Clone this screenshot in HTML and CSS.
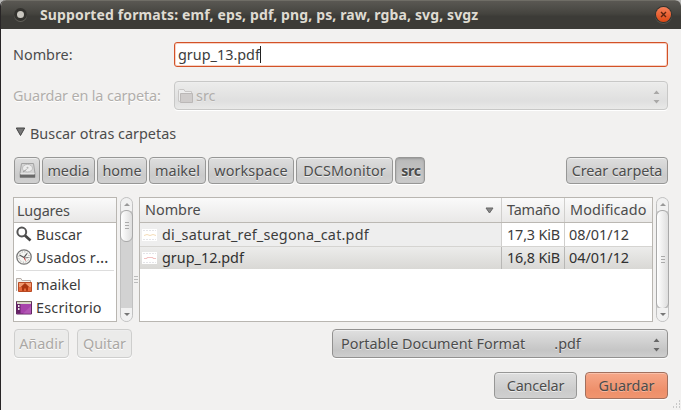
FILE: index.html
```html
<!DOCTYPE html>
<html lang="es">
<head>
<meta charset="utf-8">
<title>Supported formats</title>
<link rel="stylesheet" href="styles.css">
</head>
<body>
<div class="window">
  <header class="titlebar">
    <span class="menu-dot"></span>
    <h1>Supported formats: emf, eps, pdf, png, ps, raw, rgba, svg, svgz</h1>
    <span class="close"><svg width="15" height="15" viewBox="0 0 15 15"><path d="M5 5l5 5M10 5l-5 5" stroke="#5c2410" stroke-width="1.4"/></svg></span>
  </header>
  <main>
    <div class="row name-row">
      <span class="label">Nombre:</span>
      <div class="entry"><span class="t-entry">grup_13.pdf</span><i class="caret"></i></div>
    </div>
    <div class="row folder-row">
      <span class="label off t-folder">Guardar en la carpeta:</span>
      <div class="combo disabled">
        <svg width="17" height="16" viewBox="0 0 17 16"><path d="M.5 13V2.5Q.5 1.500 1.500 1.500H6L7 3.500H13.500V5" fill="#eee" stroke="#c9c7c6"/><path d="M2.500 5.500h12v9h-12z" fill="#cfcccb" stroke="#bbb8b7"/><path d="M.5 13.500h2" stroke="#c9c7c6"/></svg>
        <span class="grow">src</span>
        <svg class="arrows" width="7" height="14" viewBox="0 0 7 14"><path d="M.5 4L3.5 .5 6.5 4zM.5 10H6.5L3.5 13.5z" fill="#a9a8a7"/></svg>
      </div>
    </div>
    <div class="expander">
      <svg width="11" height="10" viewBox="0 0 11 10"><path d="M1.3 1H9.7L5.5 8.5z" fill="#777" stroke="#444"/></svg>
      <span class="t-search">Buscar otras carpetas</span>
    </div>
    <nav class="path">
      <span class="btn w-disk"><svg width="17" height="17" viewBox="0 0 17 17"><path d="M2.500 1.500h12l1.500 10v4H1v-4z" fill="#d4d4d4" stroke="#a2a2a2"/><path d="M1 12h15v3.500H1z" fill="#6a6a6a"/><path d="M1.500 12h14" stroke="#f4f4f4"/><ellipse cx="8.500" cy="6.200" rx="5" ry="3.800" fill="#ececec" stroke="#bcbcbc"/><circle cx="8.500" cy="5.700" r="1" fill="#b5b5b5"/><path d="M7.500 7.500l-3.500 2.500" stroke="#999"/></svg></span>
      <span class="btn w-media">media</span>
      <span class="btn w-home">home</span>
      <span class="btn w-maikel">maikel</span>
      <span class="btn w-work">workspace</span>
      <span class="btn w-dcs">DCSMonitor</span>
      <span class="btn w-src pressed">src</span>
      <span class="btn w-create">Crear carpeta</span>
    </nav>
    <section class="panes">
      <div class="places">
        <div class="head">Lugares</div>
        <ul>
          <li><svg width="17" height="17" viewBox="0 0 17 17"><circle cx="5.800" cy="6" r="4.400" fill="#fff" stroke="#555" stroke-width="2"/><path d="M9 9.500l5.500 5" stroke="#444" stroke-width="2.700"/></svg><span>Buscar</span></li>
          <li><svg width="17" height="17" viewBox="0 0 17 17"><circle cx="8" cy="8" r="7.200" fill="#f4f4f1" stroke="#777" stroke-width="1.300"/><circle cx="8" cy="8" r="5.200" fill="none" stroke="#999" stroke-dasharray="1 1.700"/><path d="M3.500 6l4.500 2.500 3-4" fill="none" stroke="#555" stroke-width="1.200"/><path d="M8 8.500l1.500 3" stroke="#c33"/><path d="M8.500 9l4-.5" stroke="#777"/></svg><span>Usados r<span class="dots">…</span></span></li>
          <li class="rule"></li>
          <li><svg width="17" height="16" viewBox="0 0 17 16"><path d="M.5 14V1.500h4.500l1 2h8.500v4" fill="#f3f1ef" stroke="#b5aca6"/><path d="M2.500 5.500h13v9h-13z" fill="#e4683a" stroke="#b94a24"/><path d="M3 6h12v4H3z" fill="#f19a70"/><path d="M9 6l-4.500 4.200H6v3.500h2V11.500h2v2.200h2v-3.500h1.500z" fill="#a9350f"/></svg><span>maikel</span></li>
          <li><svg width="17" height="16" viewBox="0 0 17 16"><path d="M.5 1.500h15v12.500H.5z" fill="#a743aa" stroke="#612761"/><path d="M1 1h14v3H1z" fill="#d8d7c8"/><path d="M.5 1.500h15" stroke="#777260"/><path d="M1 4h3.500v9.500H1z" fill="#652366"/><path d="M2 5h1.500v2H2zM2 8h1.500v2H2z" fill="#eee"/><path d="M7 13.500L15 6v7.500z" fill="#b357b5"/></svg><span class="t-desk">Escritorio</span></li>
        </ul>
      </div>
      <div class="scroll s-left"><b class="up"></b><i class="thumb"></i><b class="down"></b></div>
      <div class="grip"></div>
      <div class="files">
        <div class="frow fhead"><span class="c1"><span class="grow">Nombre</span><svg width="9" height="7" viewBox="0 0 9 7"><path d="M1 1h7L4.500 6z" fill="#888" stroke="#666"/></svg></span><span class="c2">Tamaño</span><span class="c3 t-mod">Modificado</span></div>
        <div class="frow"><span class="c1"><svg class="thumbpic" width="17" height="14" viewBox="0 0 17 14"><path d="M1 1h15v12H1z" fill="#fff"/><path d="M2 2.500h13M2 11.500h13" stroke="#e4e4e8" stroke-dasharray="2 1"/><path d="M3 7.500l3-1 3 1 3-1 3 1" fill="none" stroke="#f4dcb7"/></svg><span class="t-file">di_saturat_ref_segona_cat.pdf</span></span><span class="c2 t-size">17,3 KiB</span><span class="c3 t-date">08/01/12</span></div>
        <div class="frow chosen"><span class="c1"><svg class="thumbpic" width="17" height="14" viewBox="0 0 17 14"><path d="M1 1h15v12H1z" fill="#fff"/><path d="M2 2.500h13M2 11.500h13" stroke="#e4e4e8" stroke-dasharray="2 1"/><path d="M3 7.500h3v-1h6v1h3" fill="none" stroke="#f2c2c2"/></svg><span class="t-entry">grup_12.pdf</span></span><span class="c2 t-size">16,8 KiB</span><span class="c3 t-date">04/01/12</span></div>
      </div>
      <div class="scroll s-right"><b class="up"></b><i class="thumb"></i><b class="down"></b></div>
    </section>
    <div class="tools">
      <span class="btn inert w-add">Añadir</span>
      <span class="btn inert w-remove">Quitar</span>
      <div class="combo format">
        <span class="t-format">Portable Document Format</span><span class="grow ext">.pdf</span>
        <svg class="arrows" width="7" height="14" viewBox="0 0 7 14"><path d="M.5 4L3.500 .5 6.500 4zM.5 10H6.500L3.500 13.500z" fill="#666"/></svg>
      </div>
    </div>
    <footer>
      <span class="btn action t-cancel">Cancelar</span>
      <span class="btn action primary">Guardar</span>
    </footer>
  </main>
  <svg class="resize" width="10" height="10" viewBox="0 0 10 10"><path d="M8 1h1M5 4h1M8 4h1M2 7h1M5 7h1M8 7h1" stroke="#bbb" stroke-width="1.500"/></svg>
</div>
</body>
</html>
```

FILE: styles.css
```css
* { box-sizing: border-box; }
body { margin: 0; background: #b9b9b7; overflow: hidden; }
.window {
  position: relative; width: 681px; height: 410px; overflow: hidden;
  background: #f2f1f0; border-left: 1px solid #282526;
  border-radius: 6px 6px 0 0;
  font: 14.4px/20px "Noto Sans", sans-serif; color: #4c4c4c; white-space: nowrap;
}
.titlebar {
  display: flex; align-items: center; height: 29px; padding: 0 10px 0 12px;
  background: linear-gradient(#5a5853 0, #45443f 45%, #3c3b37 55%, #3c3b37);
  border-top: 1px solid #6f6d66;
}
.menu-dot { width: 13px; height: 13px; margin: -1px 1px 0; border-radius: 50%; background: #c9c6bf; border: 3px solid #33322e; box-shadow: 0 1px 0 #65635c; }
h1 { flex: 1; margin: 0 0 0 12px; font-size: 14px; line-height: 20px; color: #dfdbd2; letter-spacing: .13px; }
.close { width: 15px; height: 15px; margin-top: -1px; border-radius: 50%; background: linear-gradient(#f58059, #dd4814); box-shadow: 0 0 0 1px #32312d, 0 1px 0 1px #59574f; }
svg { display: block; flex: none; }
main { padding: 13px 13px 0 12px; }
.row { display: flex; align-items: center; }
.label { width: 161px; }
.t-folder { letter-spacing: -.15px; }
.off { color: #b1aeab; text-shadow: 0 1px #fff; }
.entry { display: flex; align-items: center; flex: 1; height: 25px; padding-left: 3px; border: 1px solid #d25227; border-radius: 3px; background: #fff; box-shadow: inset 0 0 0 1px #f9d1c3; color: #3c3c3c; }
.caret { width: 1px; height: 17px; background: #222; }
.folder-row { margin-top: 14px; }
.combo { display: flex; align-items: center; flex: 1; height: 29px; padding: 0 7px 0 4px; border: 1px solid #929190; border-radius: 4px; background: linear-gradient(#e0e0e0, #c5c5c5 75%, #cecece); box-shadow: inset 0 1px #eee, 0 1px #fff; text-shadow: 0 1px #e9e9e9; }
.combo.disabled { padding-left: 3px; gap: 1px; color: #b1aeab; border-color: #c8c8c7; background: linear-gradient(#ececeb, #dfdfdf 70%, #e9e9e8); }
.grow { flex: 1; }
.arrows { margin-top: 3px; }
.expander { display: flex; align-items: center; height: 20px; margin: 14px 0 0 2px; gap: 4px; }
.expander svg { margin-top: -4px; }
.path { display: flex; gap: 2px; height: 27px; margin-top: 13px; padding-left: 1px; }
.btn { display: flex; align-items: center; justify-content: center; border: 1px solid #979796; border-radius: 4px; background: linear-gradient(#dedede, #cbcbcb 70%, #d0d0d0); box-shadow: inset 0 1px #eee, 0 1px #fff; text-shadow: 0 1px #eee; }
.w-disk { width: 26px; }
.w-media { width: 53px; }
.w-home { width: 50px; }
.w-maikel { width: 57px; }
.w-work { width: 86px; letter-spacing: .1px; }
.w-dcs { width: 97px; letter-spacing: .1px; }
.w-src { width: 30px; }
.pressed { padding: 1px 0 0 2px; font-weight: 700; font-size: 14px; letter-spacing: -.2px; background: linear-gradient(#b9b9b9, #cacaca); box-shadow: inset 0 1px 2px #999, 0 1px #fff; }
.w-create { width: 102px; margin-left: auto; letter-spacing: -.1px; }
.panes { display: flex; height: 125px; margin: 13px -1px 0 0; }
.places { width: 104px; border: 1px solid #b9b6b1; background: #fff; color: #3c3c3c; }
.head, .fhead { height: 25px; background: linear-gradient(#fafafa, #e9e8e7); border-bottom: 1px solid #bbb8b3; color: #4c4c4c; }
.head { padding: 3px 0 0 3px; letter-spacing: -.2px; }
ul { list-style: none; margin: 0; padding: 0 2px; }
li { display: flex; align-items: center; height: 23px; gap: 3px; }
.dots { letter-spacing: 1px; font-size: 16px; }
.t-desk { letter-spacing: .2px; }
.rule { height: 1px; margin: 1px 0 2px; background: #ddd; }
.scroll { position: relative; display: flex; flex-direction: column; width: 13px; height: 125px; margin-left: 3px; border: 1px solid #c1c1c1; border-radius: 7px; background: #d2d2d2; }
.up, .down { flex: none; display: grid; place-items: center; height: 13px; background: #f1f1f1; }
.up { border-radius: 6px 6px 0 0; }
.down { margin-top: auto; border-radius: 0 0 6px 6px; }
.up::before, .down::before { content: ""; border: 3px solid transparent; border-top: 0; border-bottom: 3px solid #999; }
.down::before { border-bottom: 0; border-top: 3px solid #777; }
.thumb { display: grid; place-items: center; margin: -1px; border: 1px solid #a9a9a9; border-radius: 6px; background: linear-gradient(90deg, #fff, #dedede); }
.thumb::before { content: ""; width: 4px; height: 8px; background: repeating-linear-gradient(#aaa 0 1px, transparent 1px 3px); }
.s-left .thumb { height: 32px; }
.s-right .thumb { flex: 1; }
.grip { width: 4px; height: 8px; align-self: center; margin: 41px 1px 0; background: repeating-linear-gradient(#bbb 0 1px, transparent 1px 3px); }
.grip + .files { flex: 1; }
.files { border: 1px solid #b9b6b1; background: #fff; color: #3c3c3c; }
.frow { display: flex; height: 23px; }
.frow > span { display: flex; align-items: center; }
.c1 { flex: 1; padding-left: 1px; border-right: 1px solid #d0cfcd; background: #eee; }
.c2 { width: 63px; padding-left: 5px; border-right: 1px solid #d0cfcd; letter-spacing: -.15px; }
.c3 { width: 87px; padding-left: 4px; }
.t-mod { padding-left: 5px; letter-spacing: .1px; }
.t-file { letter-spacing: .2px; }
.thumbpic { margin-right: 4px; }
.fhead { height: 25px; }
.fhead .c1 { background: none; padding-left: 5px; padding-right: 7px; }
.chosen { background: linear-gradient(#ececeb, #d9d8d5); border-top: 1px solid #d5d4d1; color: #303030; }
.chosen .c1 { background: none; }
.chosen .c1, .chosen .c2 { border-color: #b8b7b5; }
.tools { display: flex; height: 29px; margin-top: 7px; padding-left: 1px; }
.inert { color: #aaa7a4; border-color: #cececd; background: #ebebea; text-shadow: 0 1px #fff; }
.w-add { width: 55px; }
.w-remove { width: 55px; margin-left: 8px; }
.format { flex: none; width: 336px; margin-left: auto; padding-left: 8px; }
.ext { margin-left: 29px; }
footer { display: flex; justify-content: flex-end; gap: 8px; height: 27px; margin-top: 14px; }
.action { width: 83px; }
.t-cancel { letter-spacing: -.15px; }
.primary { background: linear-gradient(#f6a788, #ee8f6a 70%, #f0956f); border-color: #a1705e; box-shadow: inset 0 1px #fac0a9, 0 1px #fff; text-shadow: 0 1px #f6b59c; }
.resize { position: absolute; right: 0; bottom: 0; }
```
